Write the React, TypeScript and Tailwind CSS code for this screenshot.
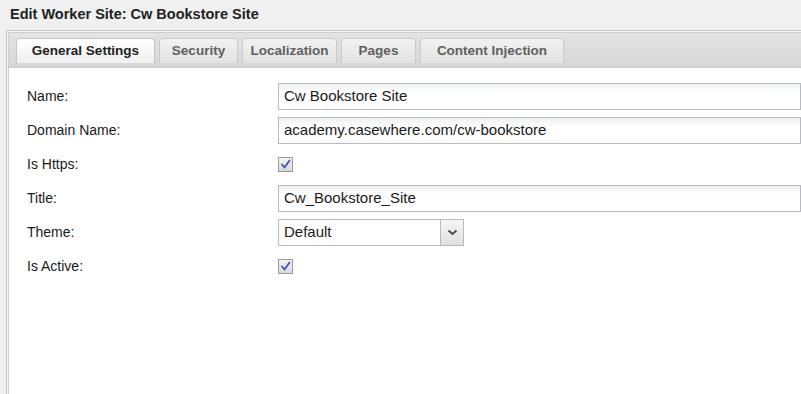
import { ReactNode } from 'react';

const tabs = [
	{ name: 'General Settings', w: 'w-[139px]' },
	{ name: 'Security', w: 'w-[79px]' },
	{ name: 'Localization', w: 'w-[95px]' },
	{ name: 'Pages', w: 'w-[75px]' },
	{ name: 'Content Injection', w: 'w-[144px]' },
];

const CheckBox = () => (
	<div className="w-[15px] h-[15px] border border-[#9a9aa0] bg-gradient-to-b from-[#f4f4f4] to-[#d8d8dc] flex items-center justify-center">
		<svg width="11" height="11" viewBox="0 0 11 11">
			<path d="M2 5.5 L4.5 8.5 L9.5 1.5" stroke="#3b58a8" strokeWidth="1.8" fill="none" strokeLinecap="round" strokeLinejoin="round" />
		</svg>
	</div>
);

const TextBox = ({ value }: { value: string }) => (
	<div className="h-[27px] w-[560px] border border-[#b9b9c6] bg-gradient-to-b from-[#eef0f2] to-white to-[35%] flex items-center pl-[5px] text-[15px] text-[#1a1a1a]">
		{value}
	</div>
);

const Row = ({ label, children }: { label: string; children: ReactNode }) => (
	<div className="flex items-center h-[27px]">
		<div className="w-[251px] shrink-0 text-[14px] text-[#1a1a1a]">{label}</div>
		{children}
	</div>
);

export default function App() {
	return (
		<div
			className="w-[801px] h-[394px] overflow-hidden bg-[#f0f0f0] flex flex-col"
			style={{ fontFamily: '"Liberation Sans", Arial, sans-serif' }}
		>
			<div className="h-[30px] shrink-0 px-[10px] flex items-center text-[14.5px] font-bold text-[#222]">
				Edit Worker Site: Cw Bookstore Site
			</div>
			<div className="flex-1 ml-[6px] border-l border-t border-[#c4c4c4] pl-[1px] pt-[1px] bg-[#f6f6f6] flex flex-col">
				<div className="flex-1 border-l border-t border-[#cfcfcf] bg-white flex flex-col">
					<div className="h-[35px] shrink-0 bg-gradient-to-b from-[#e4e4e4] to-[#d6d6d6] border-b border-[#c8c8c8] flex items-start pt-[5px] pl-[7px] gap-[4px]">
						{tabs.map((t, i) => (
							<div
								key={t.name}
								className={
									i === 0
										? `${t.w} h-[25px] flex items-center justify-center rounded-t-[4px] border border-b-0 border-[#c5c5c5] bg-gradient-to-b from-white to-[#f0f0f0] text-[13.5px] font-bold text-[#222]`
										: `${t.w} h-[25px] flex items-center justify-center rounded-t-[4px] border border-b-0 border-[#cacaca] bg-gradient-to-b from-[#f2f2f2] to-[#e2e2e2] text-[13.5px] font-bold text-[#606060]`
								}
							>
								{t.name}
							</div>
						))}
					</div>
					<div className="flex-1 pt-[15px] pl-[18px] flex flex-col gap-[7px]">
						<Row label="Name:">
							<TextBox value="Cw Bookstore Site" />
						</Row>
						<Row label="Domain Name:">
							<TextBox value="academy.casewhere.com/cw-bookstore" />
						</Row>
						<Row label="Is Https:">
							<CheckBox />
						</Row>
						<Row label="Title:">
							<TextBox value="Cw_Bookstore_Site" />
						</Row>
						<Row label="Theme:">
							<div className="h-[27px] w-[186px] border border-[#b9b9c6] bg-white flex items-stretch">
								<div className="flex-1 flex items-center pl-[5px] text-[15px] text-[#1a1a1a]">Default</div>
								<div className="w-[23px] border-l border-[#b9b9c6] bg-gradient-to-b from-[#f6f6f6] to-[#e0e0e0] flex items-center justify-center">
									<svg width="11" height="7" viewBox="0 0 11 7">
										<path d="M1.5 1.5 L5.5 5 L9.5 1.5" stroke="#4a4a4a" strokeWidth="2" fill="none" />
									</svg>
								</div>
							</div>
						</Row>
						<Row label="Is Active:">
							<CheckBox />
						</Row>
					</div>
				</div>
			</div>
		</div>
	);
}
